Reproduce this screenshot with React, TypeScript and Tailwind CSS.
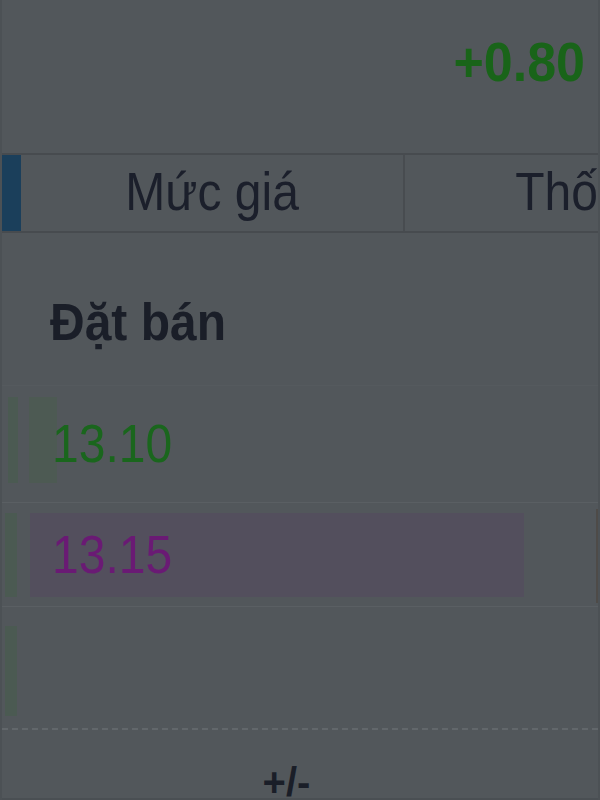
const rows = [
  { price: '13.10', tone: 'text-[#1a661d]' },
  { price: '13.15', tone: 'text-[#6a1a74]' },
]

export default function App() {
  return (
    <div className="h-[800px] w-[600px] overflow-hidden bg-[#52575b] font-['Liberation_Sans',Arial,sans-serif]">
      <div className="flex h-full flex-col border-x-2 border-[#4c5155]">
        {/* change */}
        <div className="flex h-[153px] shrink-0 items-start justify-end pr-[13px] pt-[33px]">
          <span className="origin-top scale-y-[1.08] text-[52px] font-bold leading-none text-[#196419]">+0.80</span>
        </div>

        {/* header */}
        <div className="flex h-[80px] shrink-0 border-y-2 border-[#474b4f]">
          <div className="w-[19px] bg-[#1b3f5b]" />
          <div className="flex w-[387px] items-center justify-center border-r-2 border-[#484c50] pb-[2px]">
            <span className="scale-y-[1.1] text-[48px] leading-none text-[#1b1f2b]">Mức giá</span>
          </div>
          <div className="flex flex-1 items-center whitespace-nowrap pl-[110px] pb-[2px]">
            <span className="scale-y-[1.1] text-[48px] leading-none text-[#1b1f2b]">Thố</span>
          </div>
        </div>

        <div className="flex h-[152px] shrink-0 items-start pl-[48px] pt-[64px]">
          <span className="origin-top scale-y-[1.08] text-[48px] font-bold leading-none text-[#1a1e28]">Đặt bán</span>
        </div>

        {/* price rows */}
        <div className="flex shrink-0 flex-col">
          <div className="relative flex h-[117px] items-center border-t border-[#555a5e]">
            <div className="absolute left-[6px] top-[11px] h-[86px] w-[10px] bg-[#4b5a52]" />
            <div className="absolute left-[27px] top-[11px] h-[86px] w-[28px] bg-[#4d5a53]" />
            <span className={`relative scale-y-[1.1] pl-[50px] text-[48px] leading-none ${rows[0].tone}`}>{rows[0].price}</span>
          </div>
          <div className="relative flex h-[104px] items-center border-t border-[#5a5f63]">
            <div className="absolute left-[3px] top-[10px] h-[84px] w-[12px] bg-[#4b5a52]" />
            <div className="absolute left-[28px] top-[10px] h-[84px] w-[494px] bg-[#534f5d]" />
            <div className="absolute right-0 top-[6px] h-[94px] w-[2px] bg-[#4e4b48]" />
            <span className={`relative scale-y-[1.1] pl-[50px] text-[48px] leading-none ${rows[1].tone}`}>{rows[1].price}</span>
          </div>
          <div className="relative h-[122px] border-t border-[#5a5f63]">
            <div className="absolute left-[3px] top-[19px] h-[90px] w-[12px] bg-[#4b5a52]" />
          </div>
        </div>

        <div className="shrink-0 border-t-2 border-dashed border-[#62676b]" />

        <div className="flex min-h-0 flex-1 justify-center border-b-2 border-[#4a4f53] pr-[27px] pt-[32px]">
          <span className="text-[40px] font-bold leading-none text-[#1a1e28]">+/-</span>
        </div>
      </div>
    </div>
  )
}
